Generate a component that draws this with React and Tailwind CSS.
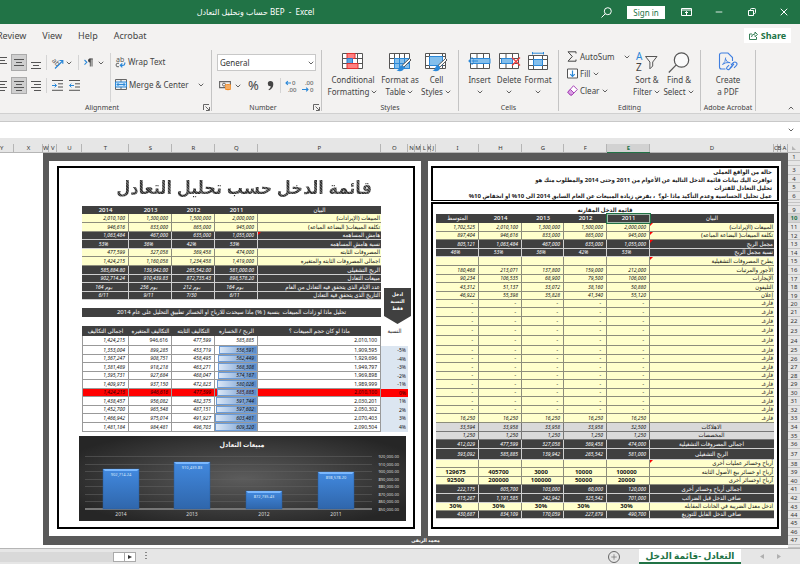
import { Search, ChevronDown, ChevronUp, Minus, X, Plus } from 'lucide-react'
import clsx from 'clsx'

const HEIGHTS = {
    3: 'h-[3px]',
    5: 'h-[5px]',
    8: 'h-[8px]',
    9: 'h-[9px]',
    10: 'h-[10px]',
    11: 'h-[11px]',
}

// Row heights of the sheet, rows 1 to 48
const ROWS = [
    8, 5, 9, 8, 9, 8, 3, 3, 8, 9,
    9, 8, 9, 8, 9, 9, 8, 9, 8, 8,
    9, 9, 10, 10, 9, 8, 9, 8, 9, 8,
    9, 8, 9, 9, 8, 9, 11, 8, 9, 8,
    9, 9, 8, 8, 9, 8, 9, 3,
]
const rowHeight = (n) => HEIGHTS[ROWS[n - 1]]

const COLUMNS = [
    ['X', 'w-[29px]'], ['W', 'w-[6px]'], ['V', 'w-[8px]'], ['U', 'w-[25px]'], ['T', 'w-[47px]'],
    ['S', 'w-[43px]'], ['R', 'w-[43px]'], ['Q', 'w-[43px]'], ['P', 'w-[123px]'], ['O', 'w-[27px]'],
    ['N', 'w-[7px]'], ['M', 'w-[6px]'], ['L', 'w-[7px]'], ['K', 'w-[3px]'], ['J', 'w-[5px]'],
    ['I', 'w-[43px]'], ['H', 'w-[43px]'], ['G', 'w-[42px]'], ['F', 'w-[43px]'], ['E', 'w-[43px]'],
    ['D', 'w-[124px]'], ['C', 'w-[4px]'], ['B', 'w-[3px]'], ['A', 'w-[7px]'],
]

const TONES = {
    yellow: 'bg-[#ffffcc] text-[#111] border-[#8d8d7c]',
    dark: 'bg-[#404040] text-white border-[#d0d0d0]',
    gray: 'bg-[#d9d9d9] text-[#111] border-[#777]',
}

const summary = [
    { row: 10, tone: 'yellow', values: ['2,010,100', '1,300,000', '1,500,000', '2,000,000'], label: 'المبيعات (الإيرادات)' },
    { row: 11, tone: 'yellow', values: ['946,616', '833,000', '865,000', '945,000'], label: 'تكلفة المبيعات( البضاعة المباعه)' },
    { row: 12, tone: 'dark', values: ['1,063,484', '467,000', '635,000', '1,055,000'], label: 'هامش المساهمه', note: true },
    { row: 13, tone: 'dark', center: true, values: ['53%', '36%', '42%', '53%'], label: 'نسبة هامش المساهمه' },
    { row: 14, tone: 'yellow', values: ['477,599', '327,058', '369,458', '474,000'], label: 'المصروفات الثابته' },
    { row: 15, tone: 'yellow', values: ['1,424,215', '1,160,058', '1,234,458', '1,419,000'], label: 'اجمالى المصروفات الثابته والمتغيره' },
    { row: 16, tone: 'dark', values: ['585,884.80', '139,942.00', '265,542.00', '581,000.00'], label: 'الربح التشغيلى' },
    { row: 17, tone: 'dark', values: ['902,714.24', '910,439.83', '872,735.43', '898,578.20'], label: 'مبيعات التعادل' },
    { row: 18, tone: 'dark', center: true, values: ['164 يوم', '256 يوم', '212 يوم', '164 يوم'], label: 'عدد الايام الذى يتحقق فيه التعادل من العام' },
    { row: 19, tone: 'dark', center: true, values: ['6/11', '9/11', '7/30', '6/11'], label: 'التاريخ الذى يتحقق فية التعادل' },
]

const whatIf = [
    ['1,424,215', '946,616', '477,599', '585,885', '2,010,100', ''],
    ['1,353,004', '899,285', '453,719', '556,591', '1,909,595', '-5%'],
    ['1,367,247', '908,751', '458,495', '562,449', '1,929,696', '-4%'],
    ['1,381,489', '918,218', '463,271', '568,308', '1,949,797', '-3%'],
    ['1,395,731', '927,684', '468,047', '574,167', '1,969,898', '-2%'],
    ['1,409,973', '937,150', '472,823', '580,026', '1,989,999', '-1%'],
    ['1,424,215', '946,616', '477,599', '585,885', '2,010,100', '0%'],
    ['1,438,457', '956,082', '482,375', '591,744', '2,030,201', '1%'],
    ['1,452,700', '965,548', '487,151', '597,602', '2,050,302', '2%'],
    ['1,466,942', '975,014', '491,927', '603,461', '2,070,403', '3%'],
    ['1,481,184', '984,481', '496,703', '609,320', '2,090,504', '4%'],
]

const dashes = ['-', '-', '-', '-', '-']
const empty = ['', '', '', '', '']

const income = [
    { tone: 'yellow', values: ['1,702,525', '2,010,100', '1,300,000', '1,500,000', '2,000,000'], label: 'المبيعات (الإيرادات)', note: true },
    { tone: 'yellow', values: ['897,404', '946,616', '833,000', '865,000', '945,000'], label: 'تكلفة المبيعات( البضاعة المباعه)', note: true },
    { tone: 'dark', values: ['805,121', '1,063,484', '467,000', '635,000', '1,055,000'], label: 'مجمل الربح', note: true },
    { tone: 'dark', center: true, values: ['46%', '53%', '36%', '42%', '53%'], label: 'نسبة مجمل الربح' },
    { tone: 'yellow', values: empty, label: 'يطرح المصروفات التشغيلية', note: true },
    { tone: 'yellow', values: ['180,468', '213,071', '137,800', '159,000', '212,000'], label: 'الأجور والمرتبات' },
    { tone: 'yellow', values: ['90,234', '106,535', '68,900', '79,500', '106,000'], label: 'الإيجارات' },
    { tone: 'yellow', values: ['43,312', '51,137', '33,072', '38,160', '50,880'], label: 'التليفون' },
    { tone: 'yellow', values: ['46,922', '55,398', '35,828', '41,340', '55,120'], label: 'إعلان' },
    ...Array.from({ length: 13 }, () => ({ tone: 'yellow', spaced: true, values: dashes, label: 'فارغـ' })),
    { tone: 'yellow', values: ['16,250', '16,250', '16,250', '16,250', '16,250'], label: 'فارغـ' },
    { tone: 'gray', mid: true, values: ['33,594', '33,958', '33,958', '33,958', '32,500'], label: 'الاهلاكات' },
    { tone: 'gray', mid: true, values: ['1,250', '1,250', '1,250', '1,250', '1,250'], label: 'المخصصات' },
    { tone: 'dark', mid: true, values: ['412,029', '477,599', '327,058', '369,458', '474,000'], label: 'اجمالى المصروفات التشغيلية' },
    { tone: 'dark', mid: true, values: ['393,092', '585,885', '139,942', '265,542', '581,000'], label: 'الربح التشغيلى' },
    { tone: 'yellow', values: empty, label: 'أرباح وخسائر عمليات أخرى', note: true },
    { tone: 'yellow', bold: true, values: ['129675', '405700', '3000', '10000', '100000'], label: 'أرباح او خسائر بيع الأصول الثابته' },
    { tone: 'yellow', bold: true, values: ['92500', '200000', '100000', '50000', '20000'], label: 'أرباح اوخسائر أخرى' },
    { tone: 'dark', mid: true, values: ['222,175', '605,700', '103,000', '60,000', '120,000'], label: 'اجمالى أرباح وخسائر أخرى' },
    { tone: 'dark', mid: true, values: ['615,267', '1,191,585', '242,942', '325,542', '701,000'], label: 'صافى الدخل قبل الضرائب' },
    { tone: 'yellow', bold: true, values: ['30%', '30%', '30%', '30%', '30%'], label: 'ادخل معدل الضريبة في الخانات المقابله' },
    { tone: 'dark', mid: true, values: ['430,687', '834,109', '170,059', '227,879', '490,700'], label: 'صافى الدخل القابل للتوزيع' },
]

const Caret = ({ className }) => <ChevronDown className={clsx('w-2 h-2 shrink-0 text-[#444]', className)} strokeWidth={2.5} />

const Note = () => (
    <svg className="absolute left-0 top-0 w-[3px] h-[3px]" viewBox="0 0 3 3"><path d="M0 0h3L0 3z" fill="#f00" /></svg>
)

/* ---------- Ribbon icons ---------- */

const Lines = ({ rows, className }) => (
    <svg className={clsx('w-[10px] h-[12px]', className)} viewBox="0 0 10 12" stroke="#555" fill="none">
        {rows.map(([x1, x2, y]) => <path key={y} d={`M${x1} ${y}.5H${x2}`} />)}
    </svg>
)

const Orientation = () => (
    <svg className="w-3 h-3 overflow-visible" viewBox="0 0 12 12" fill="none">
        <text x="-1" y="7" fontSize="7" fill="#555" transform="rotate(45 3 6)">ab</text>
        <path d="M3 11.5 10.5 4M7.5 3.5h3.3v3.3" stroke="#2b88d8" strokeWidth="1.2" />
    </svg>
)

const Indent = ({ out }) => (
    <svg className="w-[11px] h-[11px]" viewBox="0 0 11 11" fill="none">
        <path d="M0 .5h11M6 3.8h5M6 7h5M0 10.3h11" stroke="#555" />
        <path d={out ? 'M5 5.5H.5M2.3 3.6.5 5.5l1.8 1.9' : 'M0 5.5h4.5M2.7 3.6l1.8 1.9-1.8 1.9'} stroke="#2b88d8" />
    </svg>
)

const WrapIcon = () => (
    <svg className="w-[11px] h-3 overflow-visible" viewBox="0 0 11 12" fill="none">
        <text x="1" y="5.5" fontSize="7" fill="#555">ab</text>
        <path d="M4 7.300q-3-.8-3 1.700t3 1.700" stroke="#555" strokeWidth=".9" />
        <path d="M9.8 6.5v1q0 1.8-1.8 1.8H5.500M7.300 7.300l-2 2 2 2" stroke="#2b88d8" strokeWidth="1.2" />
    </svg>
)

const MergeIcon = () => (
    <svg className="w-3 h-[11px]" viewBox="0 0 12 11" fill="none">
        <path d="M.5.5h11v10H.5zM6 .5v10" stroke="#666" />
        <path d="M.5 3h11v5H.5z" fill="#cfe6f8" stroke="#2b88d8" />
        <path d="M2 5.5h8M3.5 4 2 5.5 3.5 7M8.500 4 10 5.500 8.500 7" stroke="#2b88d8" />
    </svg>
)

const TextDirectionIcon = () => (
    <svg className="w-[9px] h-[9px]" viewBox="0 0 9 9" fill="none">
        <path d="m.5 2 2.300 2.300L.5 6.600" stroke="#2b88d8" strokeWidth="1.100" />
        <path d="M5.500.9h3.300M6.300 1v7.500M8 1v7.500" stroke="#444" strokeWidth=".9" />
        <path d="M6.300.5v4.200Q4 4.700 4 2.600T6.300.5" fill="#444" />
    </svg>
)

const CommaIcon = () => (
    <svg className="w-[7px] h-[11px]" viewBox="0 0 7 11"><path d="M3.300 1Q6.300 1 6.300 4.300 6.300 8.500 2 10.300l-.5-.8Q3.800 8.300 3.800 6.200.8 6.500.8 3.700.8 1 3.300 1" fill="#444" /></svg>
)

const Launcher = () => (
    <svg className="w-[7px] h-[7px]" viewBox="0 0 7 7" fill="none" stroke="#666">
        <path d="M.5 6V.5H6M2.500 2.500l3.500 3.500M6.500 3v3.500H3" />
    </svg>
)

const MoneyIcon = () => (
    <svg className="w-3 h-[10px]" viewBox="0 0 12 10" fill="none">
        <path d="M.6.6h10.800v6H.6z" stroke="#666" strokeWidth="1.100" />
        <circle cx="5" cy="3.600" r="1.500" stroke="#666" />
        <path d="M6 3.500q3-1.200 6 0v5q-3 1.500-6 0z" fill="#f08a24" />
        <path d="M6.500 5h5M6.500 7h5" stroke="#fff" strokeWidth=".6" />
    </svg>
)

const Decimals = ({ grow }) => (
    <svg className="w-3 h-3 overflow-visible" viewBox="0 0 12 12" fill="none">
        <text x={grow ? 7 : 3} y="5" fontSize="6" fill="#444">{grow ? '0' : '.00'}</text>
        <text x={grow ? 3 : 8} y="12" fontSize="6" fill="#444">{grow ? '.00' : '0'}</text>
        <path d={grow ? 'M6 3H1M2.800 1.200 1 3l1.800 1.800' : 'M0 9.500h6M4.200 7.700 6 9.500l-1.800 1.800'} stroke="#2b88d8" strokeWidth="1.100" />
    </svg>
)

const Grid = () => <path d="M.5 1.500h20v15H.5zM.5 6.500h20M.5 11.500h20M5.500 1.500v15M10.500 1.500v15M15.500 1.500v15" fill="#fff" stroke="#555" />

const Brush = () => (
    <>
        <path d="M20.500 6.500 13 13.500l1.800 1.600L22 8z" fill="#fff" stroke="#555" />
        <path d="M13.500 13.500q-3 0-3.500 3-.5 1.500-2.500 1.800 3.500 1.700 6 .2 2-1.500 1.500-3.500z" fill="#2b88d8" />
    </>
)

const ConditionalIcon = () => (
    <svg className="w-[22px] h-[20px]" viewBox="0 0 22 20">
        <Grid />
        <path d="M5 1.500h8v5H5z" fill="#ff8080" stroke="#e03030" />
        <path d="M5 6.500h5.500v5H5z" fill="#5aa5e0" stroke="#2b78c8" />
        <path d="M5 11.500h11v5H5z" fill="#ff8080" stroke="#e03030" />
    </svg>
)

const FormatTableIcon = () => (
    <svg className="w-[23px] h-[20px]" viewBox="0 0 23 20">
        <Grid />
        <path d="M5.500 6.500h15v10h-15z" fill="#84bfec" stroke="#2b88d8" />
        <path d="M5.500 11.500h15M10.500 6.500v10M15.500 6.500v10" stroke="#2b88d8" />
        <Brush />
    </svg>
)

const CellStylesIcon = () => (
    <svg className="w-[23px] h-[20px]" viewBox="0 0 23 20">
        <path d="M.5 1.500h20v15H.5zM.5 4.500h20M4.500 1.500v15M17.500 1.500v15M.5 13.500h20" fill="#fff" stroke="#555" />
        <path d="M4.500 4.500h13v9h-13z" fill="#84bfec" stroke="#2b88d8" />
        <Brush />
    </svg>
)

const InsertIcon = () => (
    <svg className="w-[23px] h-[20px]" viewBox="0 0 23 20">
        <path d="M2.500 1.500h19v15h-19zM2.500 6.500h19M2.500 11.500h19M9 1.500v15M15.500 1.500v15" fill="#fff" stroke="#555" />
        <path d="M5 6.500h17v5H5z" fill="#84bfec" stroke="#2b88d8" />
        <path d="M10 9H1M4.500 5.500 1 9l3.500 3.500" fill="none" stroke="#2b88d8" strokeWidth="1.200" />
    </svg>
)

const DeleteIcon = () => (
    <svg className="w-[23px] h-[20px]" viewBox="0 0 23 20">
        <path d="M1.500 1.500h19v15h-19zM1.500 6.500h19M1.500 11.500h19M8 1.500v15M14.500 1.500v15" fill="#fff" stroke="#555" />
        <path d="M3.500 6.500h11v5h-11z" fill="#84bfec" stroke="#2b88d8" />
        <path d="m14 5.500 8 8M22 5.500l-8 8" stroke="#f04040" strokeWidth="1.300" />
    </svg>
)

const FormatIcon = () => (
    <svg className="w-[22px] h-[20px]" viewBox="0 0 22 20">
        <path d="M1.500 3.500h19v14h-19zM1.500 7.500h19M1.500 13.500h19M6.500 3.500v14M15.500 3.500v14" fill="#fff" stroke="#555" />
        <path d="M6.500 7.500h9v6h-9z" fill="#84bfec" stroke="#2b88d8" />
        <path d="M5.500 0v2.500M16.500 0v2.500M5.500 1.200h11" stroke="#2b88d8" />
    </svg>
)

const SigmaIcon = () => (
    <svg className="w-[10px] h-[11px]" viewBox="0 0 10 11" fill="none" stroke="#444">
        <path d="M9 2.500V.8H1l4.300 4.700L1 10.200h8V8.500" />
    </svg>
)

const FillIcon = () => (
    <svg className="w-[11px] h-[11px]" viewBox="0 0 11 11" fill="none">
        <path d="M.5 1h10v9H.5z" fill="#fff" stroke="#555" />
        <path d="M5.500 2.500v6M3.200 6.200l2.300 2.300 2.300-2.300" stroke="#2b88d8" strokeWidth="1.200" />
    </svg>
)

const EraserIcon = () => (
    <svg className="w-[11px] h-[11px]" viewBox="0 0 11 11" strokeLinejoin="round">
        <path d="M6.500.7 10.300 4.500 5 10H3.300L.8 7.200z" fill="#fff" stroke="#a844b8" />
        <path d="M3.300 4.300 7 8 5 10H3.300L.8 7.200z" fill="#d9a0e2" stroke="#a844b8" />
    </svg>
)

const SortIcon = () => (
    <svg className="w-[22px] h-[20px] overflow-visible" viewBox="0 0 22 20" fill="none">
        <text x="0" y="8" fontSize="10" fill="#2b88d8">A</text>
        <text x="0" y="19" fontSize="10" fill="#444">Z</text>
        <path d="M9.500 4.500h11.500l-4.300 5.500v4l-2.800 2.800V10z" stroke="#555" />
    </svg>
)

const FindIcon = () => (
    <svg className="w-[22px] h-[21px]" viewBox="0 0 22 21" fill="none" stroke="#555" strokeWidth="1.200">
        <circle cx="13.500" cy="8" r="7.200" fill="#fafafa" />
        <path d="M8 13.200.8 20.500" />
    </svg>
)

const PdfIcon = () => (
    <svg className="w-5 h-5" viewBox="0 0 20 20" fill="none" stroke="#3f7fe0" strokeWidth="1.100">
        <path d="M7.500 17H3.500Q1.500 17 1.500 15V3q0-2 2-2H10l4.500 4.500V9" />
        <path d="M4.500 12.500q3.200-2.500 3.200-7M7.500 7q1 3.500 5 4M4.500 12.500q3-2.500 7.500-2" strokeWidth=".9" />
        <path d="m13 13 2.500-2.500q1.500-1 2.800.2t.2 2.600L16 15.800M14.500 14l-3 3q-1.300 1.300-2.400.2t.2-2.400l1.800-1.600M12 16l4-4" />
    </svg>
)

const ShareIcon = () => (
    <svg className="w-[9px] h-[9px]" viewBox="0 0 9 9" fill="none" stroke="#217346" strokeWidth=".9">
        <path d="M3 3H.5v5.500h7V6M2.500 6q.2-3 3.500-3V1l2.500 2.500L6 5.700V4.300" />
    </svg>
)

/* ---------- Ribbon ---------- */

const Group = ({ label, launcher, className, children }) => (
    <section aria-label={label} className={clsx('flex flex-col border-r border-[#c4c4c4] mt-[3px] mb-[2px] shrink-0', className)}>
        <div className="flex-1 flex">{children}</div>
        <div className="flex items-end h-[6px] px-px text-[7px] leading-[6px] text-[#444]">
            <span className="flex-1 text-center whitespace-nowrap">{label}</span>
            {launcher && <button aria-label={`${label} settings`}><Launcher /></button>}
        </div>
    </section>
)

const BigButton = ({ icon, lines, caret, className }) => (
    <button className={clsx('flex flex-col items-center self-start text-[8px] leading-[12px] whitespace-nowrap', className)}>
        <span className="h-6 flex items-center">{icon}</span>
        <span>{lines[0]}</span>
        <span className="flex items-center gap-px h-3">{lines[1]}{caret && <Caret />}</span>
    </button>
)

const Ribbon = () => (
    <div className="flex h-[67px] bg-[#f3f2f1] border-b border-[#d0d0d0] text-[#444]">
        <Group label="Alignment" launcher className="w-[212px]">
            <div className="flex-1 flex flex-col pt-1 gap-[7px]">
                <div className="flex items-center h-[17px]">
                    <button aria-label="Top Align" className="w-[11px]"><Lines rows={[[0, 7, 0], [0, 5, 3], [0, 7, 6]]} /></button>
                    <button aria-label="Middle Align" className="w-4 h-[17px] flex justify-center items-center bg-[#cfcfcf] border border-[#aaa]"><Lines rows={[[0, 10, 2], [2, 8, 5], [0, 10, 8]]} /></button>
                    <button aria-label="Bottom Align" className="ml-1 w-[10px]"><Lines rows={[[0, 10, 5], [2, 8, 8], [0, 10, 11]]} /></button>
                    <span className="ml-[5px] w-px h-[15px] bg-[#d4d4d4]" />
                    <button aria-label="Orientation" className="ml-[5px] flex items-center gap-px"><Orientation /><Caret /></button>
                    <span className="ml-[5px] w-px h-[15px] bg-[#d4d4d4]" />
                    <button aria-label="Text Direction" className="ml-[5px] flex items-center gap-1"><TextDirectionIcon /><Caret /></button>
                </div>
                <div className="flex items-center h-[15px]">
                    <button aria-label="Align Left" className="w-[11px]"><Lines rows={[[0, 7, 1], [0, 5, 4], [0, 7, 7], [0, 5, 10]]} /></button>
                    <button aria-label="Center" className="w-4 h-[17px] flex justify-center items-center bg-[#cfcfcf] border border-[#aaa]"><Lines rows={[[0, 10, 1], [2, 8, 4], [0, 10, 7], [2, 8, 10]]} /></button>
                    <button aria-label="Align Right" className="ml-1 w-[10px]"><Lines rows={[[0, 10, 1], [3, 10, 4], [0, 10, 7], [3, 10, 10]]} /></button>
                    <span className="ml-[5px] w-px h-[15px] bg-[#d4d4d4]" />
                    <button aria-label="Increase Indent" className="ml-[5px]"><Indent /></button>
                    <button aria-label="Decrease Indent" className="ml-[6px]"><Indent out /></button>
                </div>
            </div>
            <div className="w-[101px] my-[3px] pt-px pl-1 border-l border-[#d4d4d4] flex flex-col gap-2 text-[8px]">
                <button className="flex items-center gap-[2px] h-[15px]"><WrapIcon />Wrap Text</button>
                <button className="flex items-center gap-[2px] h-[15px] whitespace-nowrap"><MergeIcon />Merge &amp; Center<Caret className="ml-[6px]" /></button>
            </div>
        </Group>
        <Group label="Number" launcher className="w-[110px]">
            <div className="flex-1 flex flex-col pt-1 pl-[5px] pr-[5px] gap-[6px]">
                <label className="relative">
                    <select aria-label="Number Format" className="block appearance-none w-full h-[17px] pl-[2px] bg-white border border-[#c8c8c8] text-[8px] text-[#333]">
                        <option>General</option>
                    </select>
                    <Caret className="absolute right-[1px] top-[5px]" />
                </label>
                <div className="flex items-center h-[17px] pl-[2px]">
                    <button aria-label="Accounting Format" className="flex items-center gap-[3px]"><MoneyIcon /><Caret /></button>
                    <button aria-label="Percent Style" className="ml-[6px] text-[13px] leading-[17px]">%</button>
                    <button aria-label="Comma Style" className="ml-[8px]"><CommaIcon /></button>
                    <span className="ml-[6px] w-px h-[15px] bg-[#d4d4d4]" />
                    <button aria-label="Increase Decimal" className="ml-1"><Decimals grow /></button>
                    <button aria-label="Decrease Decimal" className="ml-[5px]"><Decimals /></button>
                </div>
            </div>
        </Group>
        <Group label="Styles" className="w-[137px]">
            <BigButton className="w-[62px]" icon={<ConditionalIcon />} lines={['Conditional', 'Formatting']} caret />
            <BigButton className="w-[32px]" icon={<FormatTableIcon />} lines={['Format as', 'Table']} caret />
            <BigButton className="w-[41px]" icon={<CellStylesIcon />} lines={['Cell', 'Styles']} caret />
        </Group>
        <Group label="Cells" className="w-[100px]">
            <BigButton className="w-[41px]" icon={<InsertIcon />} lines={['Insert', '']} caret />
            <BigButton className="w-[18px]" icon={<DeleteIcon />} lines={['Delete', '']} caret />
            <BigButton className="w-[40px]" icon={<FormatIcon />} lines={['Format', '']} caret />
        </Group>
        <Group label="Editing" className="w-[142px]">
            <div className="w-[71px] pl-2 pt-px flex flex-col items-start gap-[6px] text-[8px] leading-[11px]">
                <button className="flex items-center gap-[3px]"><SigmaIcon />AutoSum<Caret className="ml-[5px]" /></button>
                <button className="flex items-center gap-[2px]"><FillIcon />Fill<Caret /></button>
                <button className="flex items-center gap-[2px]"><EraserIcon />Clear<Caret /></button>
            </div>
            <BigButton className="w-[34px]" icon={<SortIcon />} lines={['Sort &', 'Filter']} caret />
            <BigButton className="w-[30px]" icon={<FindIcon />} lines={['Find &', 'Select']} caret />
        </Group>
        <Group label="Adobe Acrobat" className="w-[55px]">
            <BigButton className="w-full" icon={<PdfIcon />} lines={['Create', 'a PDF']} />
        </Group>
        <div className="flex-1 flex justify-end items-end pr-[5px] pb-px">
            <button aria-label="Collapse the Ribbon"><ChevronUp className="w-2 h-2" strokeWidth={2.5} /></button>
        </div>
    </div>
)

const TitleBar = () => (
    <header className="flex items-center h-6 bg-[#217346] text-white">
        <h1 className="flex-1 pr-[90px] text-center text-[8px]"><bdi>حساب وتحليل التعادل</bdi> BEP&nbsp; -&nbsp; Excel</h1>
        <button aria-label="Search" className="mr-[15px]">
            <svg className="w-[11px] h-[11px]" viewBox="0 0 11 11" fill="none" stroke="#fff"><circle cx="6.800" cy="4.200" r="3.500" /><path d="M4.300 6.700.5 10.500" /></svg>
        </button>
        <button className="w-[38px] h-[13px] bg-white text-[#217346] text-[8px] leading-[13px]">Sign in</button>
        <button aria-label="Ribbon Display Options" className="ml-4">
            <svg className="w-[11px] h-2" viewBox="0 0 11 8" fill="none" stroke="#fff"><path d="M.5.5h10v7H.5zM.5 2h10M5.500 7V3.500M4 5l1.500-1.500L7 5" /></svg>
        </button>
        <button aria-label="Minimize" className="ml-[22px]"><Minus className="w-[10px] h-[10px]" /></button>
        <button aria-label="Restore" className="ml-6">
            <svg className="w-2 h-2" viewBox="0 0 8 8" fill="none" stroke="#fff"><path d="M.5 2.500h5v5h-5zM2.500 2V1.500q0-1 1-1h3q1 0 1 1v3q0 1-1 1H6" /></svg>
        </button>
        <button aria-label="Close" className="ml-[22px] mr-[10px]"><X className="w-3 h-3" /></button>
    </header>
)

const MenuTabs = () => (
    <nav className="flex items-center h-[23px] bg-[#f3f2f1] text-[#444] text-[9px]">
        <a href="#review" className="-ml-[3px]">Review</a>
        <a href="#view" className="ml-4">View</a>
        <a href="#help" className="ml-4">Help</a>
        <a href="#acrobat" className="ml-4">Acrobat</a>
        <button className="ml-auto mr-[9px] flex items-center justify-center gap-[3px] w-[47px] h-[15px] bg-white text-[#217346] font-bold"><ShareIcon />Share</button>
    </nav>
)

/* ---------- Sheet ---------- */

const ValueCell = ({ tone, center, bold, spaced, children }) => (
    <td className={clsx('p-0 border-b border-r', TONES[tone], center || bold ? 'text-center' : 'text-right', spaced ? 'pr-[5px]' : 'pr-[3px]', bold ? 'text-[6px] font-bold' : 'text-[5px] italic')}>
        {children}
    </td>
)

const LabelCell = ({ tone, mid, note, children }) => (
    <td dir="rtl" className={clsx('relative p-0 pr-px border-b', TONES[tone], mid ? 'text-center' : 'text-right')}>
        {note && <Note />}
        {children}
    </td>
)

const tableBase = 'table-fixed border-separate border-spacing-0 text-[6px] leading-[7px] whitespace-nowrap'

const SummaryTable = () => (
    <table className={clsx(tableBase, 'w-[299px]')}>
        <colgroup>
            <col className="w-[47px]" /><col className="w-[43px]" /><col className="w-[43px]" /><col className="w-[43px]" /><col />
        </colgroup>
        <thead>
            <tr className={clsx('bg-[#404040] text-white', rowHeight(9))}>
                {['2014', '2013', '2012', '2011', 'البيان'].map(h => <th key={h} className="p-0 font-medium">{h}</th>)}
            </tr>
        </thead>
        <tbody>
            {summary.map(r => (
                <tr key={r.row} className={rowHeight(r.row)}>
                    {r.values.map((v, i) => <ValueCell key={i} tone={r.tone} center={r.center}>{v}</ValueCell>)}
                    <LabelCell tone={r.tone} note={r.note}>{r.label}</LabelCell>
                </tr>
            ))}
        </tbody>
    </table>
)

const WhatIfTable = () => (
    <table className={clsx(tableBase, 'w-[326px]')}>
        <colgroup>
            <col className="w-[47px]" /><col className="w-[43px]" /><col className="w-[43px]" /><col className="w-[43px]" /><col /><col className="w-[27px]" />
        </colgroup>
        <thead>
            <tr className={rowHeight(23)}>
                {['اجمالى التكاليف', 'التكاليف المتغيره', 'التكاليف الثابته', 'الربح / الخساره', 'ماذا لو كان حجم المبيعات ؟'].map(h => (
                    <th key={h} dir="rtl" className="p-0 bg-[#404040] text-white font-normal">{h}</th>
                ))}
                <th className="p-0 text-[#222] font-normal">النسبة</th>
            </tr>
        </thead>
        <tbody>
            {whatIf.map((r, i) => {
                const hit = r[5] === '0%'
                const cell = clsx('p-0 pr-[3px] text-right text-[5px] border-b border-r border-[#999]', hit ? 'bg-[#ff0000] text-[#300000]' : 'text-[#111]')
                const profit = Number(r[3].replace(',', ''))
                return (
                    <tr key={i} className={rowHeight(24 + i)}>
                        <td className={clsx(cell, 'italic border-l')}>{r[0]}</td>
                        <td className={clsx(cell, i > 0 && 'italic')}>{r[1]}</td>
                        <td className={clsx(cell, 'italic')}>{r[2]}</td>
                        <td className={clsx(cell, 'italic relative')}>
                            {i > 0 && (
                                <span
                                    className="absolute inset-y-0 right-0 border border-[#6a9bd8] bg-linear-to-r from-[#dbe7f6] to-[#5a8ac6]"
                                    style={{ width: `${Math.round(profit / 6093.2)}%` }}
                                />
                            )}
                            <span className="relative">{r[3]}</span>
                        </td>
                        <td className={cell}>{r[4]}</td>
                        <td className={clsx('p-0 pr-[2px] text-right text-[5px]', hit ? 'bg-[#ff0000] text-[#300000]' : 'text-[#111]', i > 0 && !hit && 'bg-[#dce6f1]')}>{r[5]}</td>
                    </tr>
                )
            })}
        </tbody>
    </table>
)

const bars = [
    { x: 24, top: 33, year: '2014', value: '902,714.24' },
    { x: 95, top: 26, year: '2013', value: '910,439.83' },
    { x: 167, top: 55, year: '2012', value: '872,735.43' },
    { x: 239, top: 36, year: '2011', value: '898,578.20' },
]
const ticks = ['920,000.00', '910,000.00', '900,000.00', '890,000.00', '880,000.00', '870,000.00', '860,000.00', '850,000.00']

const SalesChart = () => (
    <svg className="block w-[327px] h-[85px]" viewBox="0 0 327 85" role="img" aria-label="مبيعات التعادل">
        <defs>
            <radialGradient id="chartBg" cx="50%" cy="50%" r="60%">
                <stop offset="0" stopColor="#5c5c5c" />
                <stop offset="1" stopColor="#262626" />
            </radialGradient>
            <linearGradient id="bar" x1="0" y1="0" x2="0" y2="1">
                <stop offset="0" stopColor="#4289df" />
                <stop offset="1" stopColor="#2f66ab" />
            </linearGradient>
        </defs>
        <rect width="327" height="85" fill="url(#chartBg)" />
        <text x="163" y="11" fontSize="7" fontWeight="bold" fill="#f2f2f2" textAnchor="middle">مبيعات التعادل</text>
        {ticks.map((t, i) => {
            const y = 20 + Math.round(i * 7.57)
            return (
                <g key={t}>
                    <path d={`M6 ${y}.5H293`} stroke="#606060" strokeWidth=".6" />
                    <text x="320" y={y + 2} fontSize="4" fill="#ddd" textAnchor="end">{t}</text>
                </g>
            )
        })}
        <path d="M6 73h287" stroke="#777" strokeWidth="2" />
        {bars.map(b => (
            <g key={b.year}>
                <rect x={b.x} y={b.top} width="36" height={73 - b.top} fill="url(#bar)" stroke="#2a5c9c" strokeWidth=".5" />
                <path d={`M${b.x} ${b.top}h36l-2 2h-32z`} fill="#7ab8ff" />
                <text x={b.x + 18} y={b.top + 7} fontSize="4" fill="#dce9fa" textAnchor="middle">{b.value}</text>
                <text x={b.x + 18} y="80" fontSize="5" fill="#ddd" textAnchor="middle">{b.year}</text>
            </g>
        ))}
    </svg>
)

const BreakEvenPanel = () => (
    <section className="w-[372px] bg-white pt-[5px] px-[6px] pb-2 pl-2">
        <div className="h-[363px] border-2 border-black pl-5">
            <h2 dir="rtl" className="h-[38px] ml-[3px] w-[326px] pr-[36px] text-[18px] leading-[38px] font-bold text-right whitespace-nowrap">
                <span className="bg-[repeating-linear-gradient(45deg,#333_0_1px,#666_1px_2px)] bg-clip-text text-transparent">قائمة الدخل حسب تحليل التعادل</span>
            </h2>
            <div className="flex ml-[3px] h-[120px]">
                <div className="w-[299px]">
                    <SummaryTable />
                    <p dir="rtl" className="mt-2 h-[9px] bg-[#404040] text-white text-center text-[6px] leading-[9px] whitespace-nowrap">
                        تحليل ماذا لو زادات المبيعات&nbsp; بنسبة ( %) ماذا سيحدث للارباح او الخسائر تطبيق التحليل على عام 2014
                    </p>
                </div>
                <div className="self-end mb-[2px] ml-[3px] w-[27px] h-9 pt-[3px] bg-[#404040] [clip-path:polygon(0_0,100%_0,100%_78%,50%_100%,0_78%)] text-white text-center text-[5px] leading-[7px] font-bold">
                    ادخل<br />النسبة<br />فقط
                </div>
            </div>
            <div className="ml-[3px]"><WhatIfTable /></div>
            <div className="mt-[4px]"><SalesChart /></div>
        </div>
    </section>
)

const IncomePanel = () => (
    <section className="w-[353px] bg-white pt-[5px] pl-[3px] pr-[2px]">
        <div dir="rtl" className="h-[35px] border-2 border-b border-black pr-[5px] text-[6px] leading-[8px] font-bold text-[#222] whitespace-nowrap">
            <p>حالة من الواقع العملى</p>
            <p>توافرت اليك بيانات قائمة الدخل التالية عن الأعوام من 2011 وحتى 2014 والمطلوب منك هو</p>
            <p>تحليل التعادل للفترات</p>
            <p>عمل تحليل الحساسية وعدم التأكيد ماذا -لو؟&nbsp; ، بفرض زيادة المبيعات عن العام السابق 2014 الى 10% او انخفاض 10%</p>
        </div>
        <div className="mt-px h-[327px] border-2 border-black pl-[3px] pt-[2px]">
            <table className={clsx(tableBase, 'w-[338px]')}>
                <caption className="h-2 leading-[8px] font-bold text-[#222]">قائمة الدخل المقارنه</caption>
                <colgroup>
                    <col className="w-[43px]" /><col className="w-[43px]" /><col className="w-[42px]" /><col className="w-[43px]" /><col className="w-[43px]" /><col />
                </colgroup>
                <thead>
                    <tr className={clsx('bg-[#404040] text-white', rowHeight(10))}>
                        {['المتوسط', '2014', '2013', '2012'].map(h => <th key={h} className="p-0 font-medium">{h}</th>)}
                        <th className="relative z-10 p-0 font-medium outline outline-[#217346] shadow-[inset_0_0_0_1px_#9fb8aa]">2011</th>
                        <th className="p-0 font-medium">البيان</th>
                    </tr>
                </thead>
                <tbody>
                    {income.map((r, i) => (
                        <tr key={i} className={rowHeight(11 + i)}>
                            {r.values.map((v, j) => <ValueCell key={j} tone={r.tone} center={r.center} bold={r.bold} spaced={r.spaced}>{v}</ValueCell>)}
                            <LabelCell tone={r.tone} mid={r.mid} note={r.note}>{r.label}</LabelCell>
                        </tr>
                    ))}
                </tbody>
            </table>
        </div>
    </section>
)

const ColumnHeaders = () => (
    <div className="flex h-[15px] pt-[6px] bg-[#e6e6e6] border-b border-[#b5b5b5] text-[6px] leading-[9px] text-[#333]">
        <div className="flex-1 text-right pr-[10px] border-r border-[#b5b5b5]">Y</div>
        {COLUMNS.map(([name, width]) => (
            <div key={name} className={clsx('flex justify-center shrink-0 border-r border-[#b5b5b5]', width, name === 'E' && 'bg-[#d2d2d2] text-[#217346] font-bold shadow-[0_1px_0_#217346]')}>{name}</div>
        ))}
        <div className="w-3 shrink-0 flex justify-center items-center">
            <svg className="w-1 h-1" viewBox="0 0 4 4"><path d="M0 0v4h4z" fill="#b5b5b5" /></svg>
        </div>
    </div>
)

const Sheet = () => (
    <main className="flex-1 flex bg-white">
        <div className="flex-1" />
        <div className="w-[745px] shrink-0 font-['Noto_Sans','DejaVu_Sans_Condensed','DejaVu_Sans',sans-serif]">
            <div className="h-[392px] bg-[#595959] pt-2 px-[6px] flex flex-col">
                <div className="h-[375px] flex gap-[7px]">
                    <BreakEvenPanel />
                    <IncomePanel />
                </div>
                <p className="text-white text-center text-[5px] leading-[9px] font-bold pl-5">محمد الريفى</p>
            </div>
        </div>
        <div className="w-3 shrink-0 h-[395px] overflow-hidden bg-[#e6e6e6] text-center text-[6px] text-[#333]">
            {ROWS.map((h, i) => (
                <div key={i} className={clsx('flex items-center justify-center overflow-hidden border-b border-[#c4c4c4] leading-[8px]', HEIGHTS[h], i === 9 && 'bg-[#d2d2d2] text-[#217346] font-bold')}>
                    {h > 5 ? i + 1 : ''}
                </div>
            ))}
        </div>
    </main>
)

const SheetTabs = () => (
    <footer className="flex h-4 bg-[#e6e6e6] border-t border-[#b5b5b5]">
        <div className="flex items-center h-[15px]">
            <div className="w-[113px] h-[10px] bg-[#d9d9d9]" />
            <div className="w-3 h-[10px] bg-white border border-[#aaa]" />
            <button aria-label="Scroll right" className="w-[11px] h-[10px] flex justify-center items-center bg-white border border-l-0 border-[#aaa]">
                <svg className="w-1 h-1" viewBox="0 0 4 4"><path d="M0 0l4 2-4 2z" fill="#333" /></svg>
            </button>
            <svg className="ml-[9px] w-[2px] h-[9px]" viewBox="0 0 2 9" fill="#888"><path d="M0 0h2v1H0zM0 3h2v1H0zM0 6h2v1H0z" /></svg>
        </div>
        <div className="ml-auto flex">
            <button aria-label="New sheet" className="mr-[19px] mt-[2px] w-[12px] h-[12px] flex items-center justify-center rounded-full border border-[#666] text-[#666]"><Plus className="w-2 h-2" /></button>
            <a href="#sheet" dir="rtl" className="w-[102px] bg-white border-b-2 border-[#217346] text-[#217346] text-[9px] leading-[13px] font-bold text-center whitespace-nowrap">التعادل -قائمة الدخل</a>
            <div className="w-[59px] flex items-center justify-center gap-[13px] text-[#b0b0b0]">
                <svg className="w-1 h-[5px]" viewBox="0 0 4 5"><path d="M4 0v5L0 2.500z" fill="currentColor" /></svg>
                <svg className="w-1 h-[5px]" viewBox="0 0 4 5"><path d="M0 0v5l4-2.500z" fill="currentColor" /></svg>
            </div>
        </div>
    </footer>
)

const App = () => (
    <div className="min-h-screen flex flex-col overflow-hidden bg-[#e6e6e6] font-['Noto_Sans','DejaVu_Sans',sans-serif]">
        <TitleBar />
        <MenuTabs />
        <Ribbon />
        <div className="mt-[7px] flex items-center h-[17px] bg-white border-t border-[#c8c8c8] pr-[5px]">
            <input aria-label="Formula Bar" className="flex-1 min-w-0 h-4 px-1 text-[8px] outline-none" />
            <button aria-label="Expand Formula Bar"><Caret /></button>
        </div>
        <ColumnHeaders />
        <Sheet />
        <SheetTabs />
    </div>
)

export default App
